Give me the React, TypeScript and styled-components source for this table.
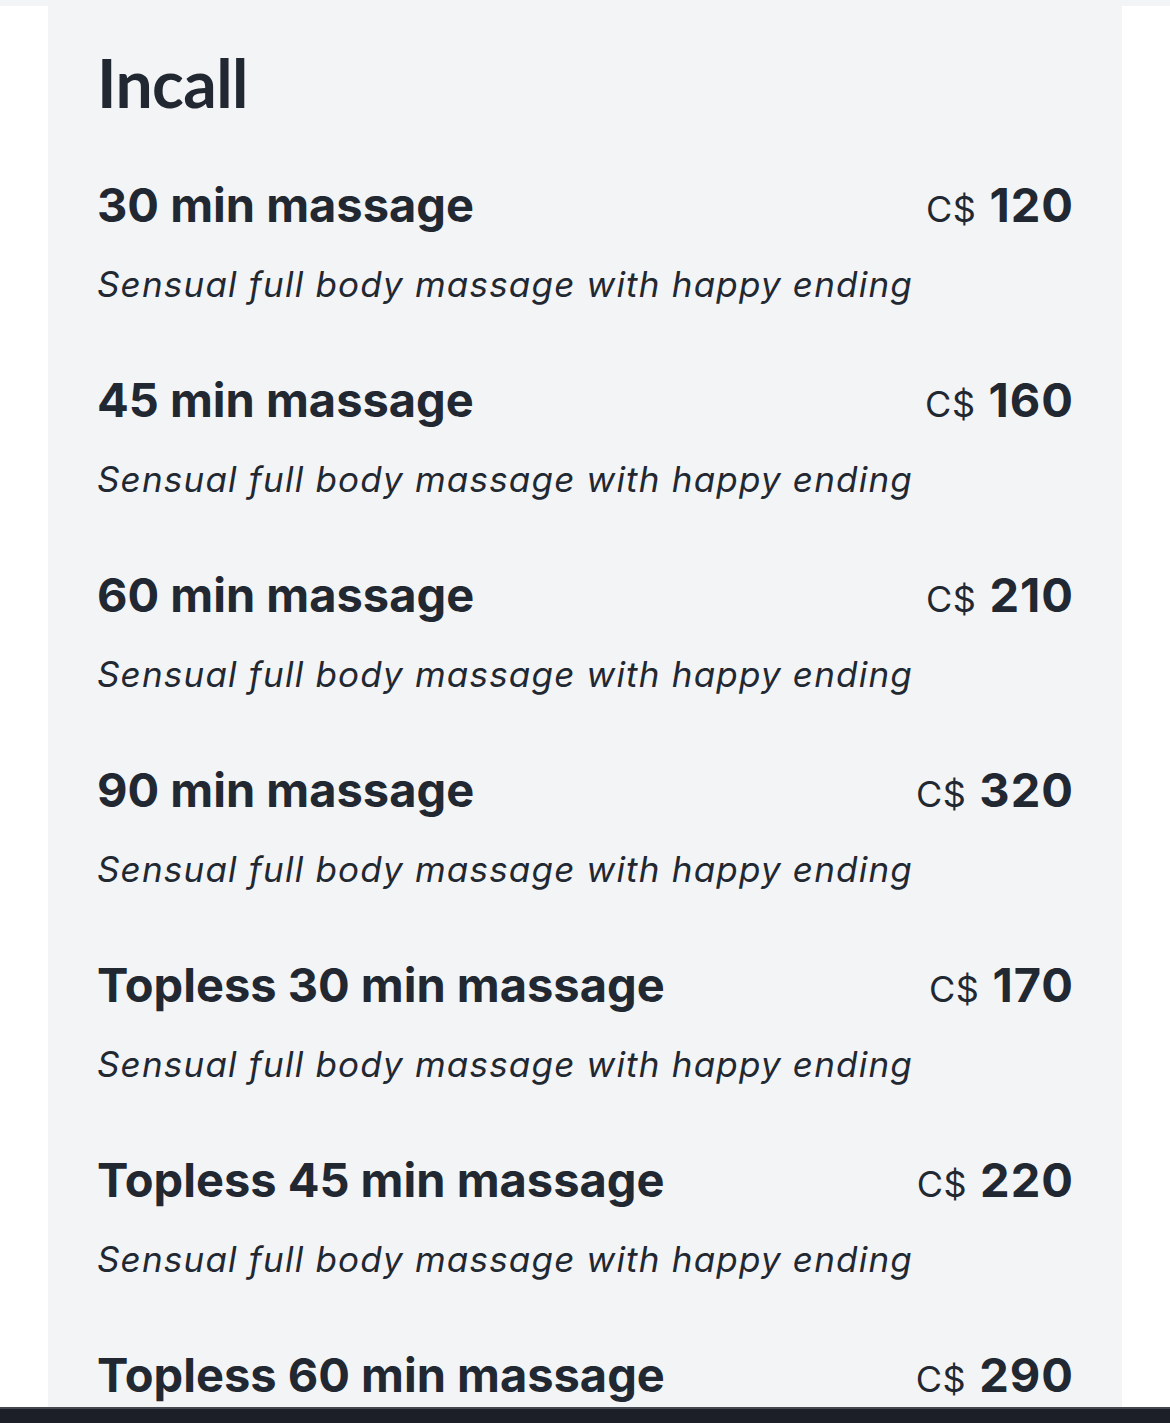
import React from "react";
import styled, { createGlobalStyle } from "styled-components";

interface Service {
  name: string;
  price: number;
  description: string;
}

const services: Service[] = [
  { name: "30 min massage", price: 120, description: "Sensual full body massage with happy ending" },
  { name: "45 min massage", price: 160, description: "Sensual full body massage with happy ending" },
  { name: "60 min massage", price: 210, description: "Sensual full body massage with happy ending" },
  { name: "90 min massage", price: 320, description: "Sensual full body massage with happy ending" },
  { name: "Topless 30 min massage", price: 170, description: "Sensual full body massage with happy ending" },
  { name: "Topless 45 min massage", price: 220, description: "Sensual full body massage with happy ending" },
  { name: "Topless 60 min massage", price: 290, description: "Sensual full body massage with happy ending" },
];

const GlobalStyle = createGlobalStyle`
  html, body {
    margin: 0;
    padding: 0;
    background: #ffffff;
    overflow: hidden;
  }
  body {
    font-family: Inter, "Noto Sans", sans-serif;
    color: #222831;
  }
`;

const TopStrip = styled.div`
  height: 6px;
  background: #f3f4f6;
`;

const Page = styled.div`
  height: 1417px;
  padding: 0 48px;
  background: #ffffff;
  overflow: hidden;
`;

const Panel = styled.section`
  height: 100%;
  background: #f3f4f6;
  padding: 37px 49px 0 49px;
  box-sizing: border-box;
`;

const Heading = styled.h2`
  margin: 0 0 52px 0;
  font-family: Lato, "Open Sans", sans-serif;
  font-weight: 700;
  font-size: 66px;
  line-height: 80px;
  letter-spacing: -0.6px;
  color: #222831;
`;

const List = styled.div`
  display: flex;
  flex-direction: column;
  gap: 61px;
`;

const Item = styled.div`
  display: flex;
  flex-direction: column;
  gap: 24px;
`;

const TitleRow = styled.div`
  display: flex;
  justify-content: space-between;
  align-items: baseline;
  height: 60px;
`;

const Name = styled.div`
  font-weight: 700;
  font-size: 47px;
  line-height: 60px;
  white-space: nowrap;
`;

const Price = styled.div`
  display: flex;
  align-items: baseline;
  gap: 13px;
  white-space: nowrap;
`;

const Currency = styled.span`
  font-weight: 400;
  font-size: 36px;
  letter-spacing: 0.5px;
`;

const Amount = styled.span`
  font-weight: 700;
  font-size: 47px;
  line-height: 60px;
  letter-spacing: 1px;
  margin-right: -1px;
`;

const Description = styled.div`
  font-style: italic;
  font-size: 35px;
  line-height: 50px;
  letter-spacing: 1.2px;
  white-space: nowrap;
`;

const BottomBar = styled.div`
  position: fixed;
  left: 0;
  right: 0;
  bottom: 0;
  height: 16px;
  background: #1c1f28;
  border-top: 2px solid #45484f;
  box-sizing: border-box;
`;

export default function App(): React.JSX.Element {
  return (
    <>
      <GlobalStyle />
      <TopStrip />
      <Page>
        <Panel>
          <Heading>Incall</Heading>
          <List>
            {services.map((s) => (
              <Item key={s.name}>
                <TitleRow>
                  <Name>{s.name}</Name>
                  <Price>
                    <Currency>C$</Currency>
                    <Amount>{s.price}</Amount>
                  </Price>
                </TitleRow>
                <Description>{s.description}</Description>
              </Item>
            ))}
          </List>
        </Panel>
      </Page>
      <BottomBar />
    </>
  );
}
